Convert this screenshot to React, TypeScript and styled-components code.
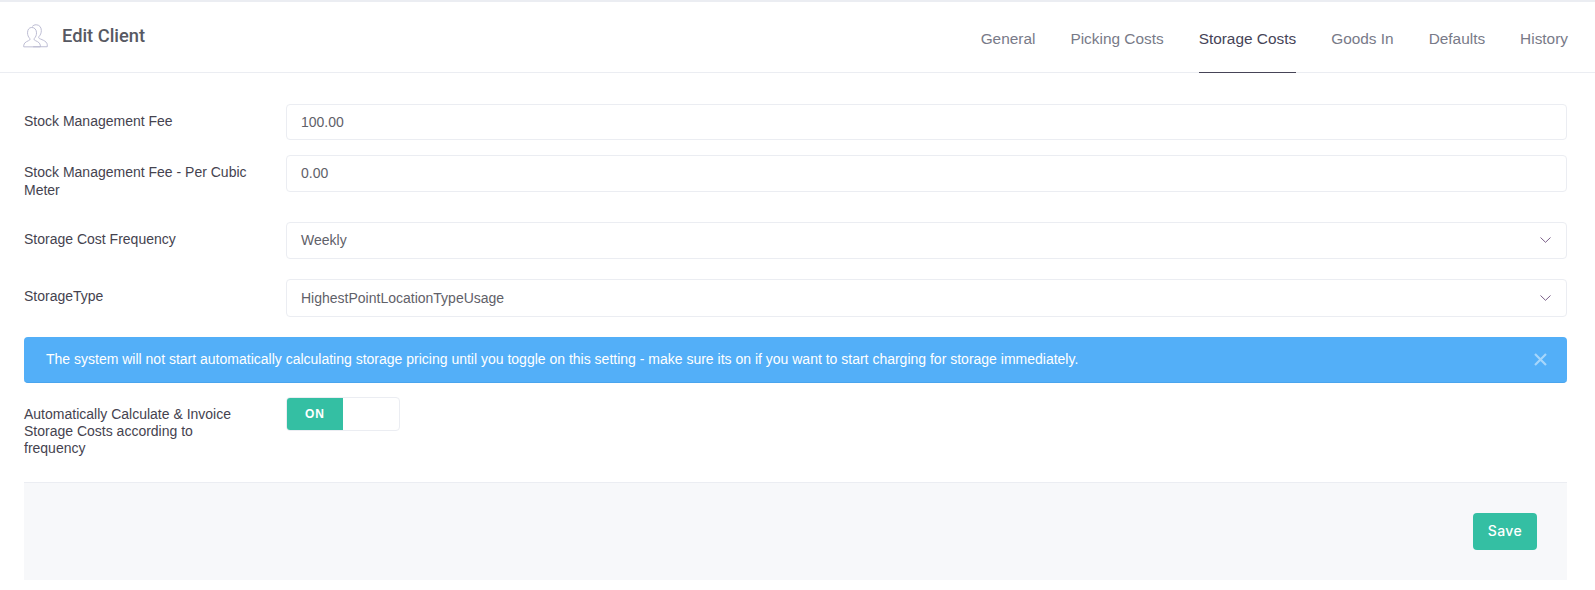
import { FunctionComponent } from "react";
import styled, { createGlobalStyle } from "styled-components";

const GlobalStyle = createGlobalStyle`
  html, body {
    margin: 0;
    padding: 0;
    background: #fff;
  }
  * {
    box-sizing: border-box;
  }
`;

const Page = styled.div`
  width: 100%;
  height: 590px;
  overflow: hidden;
  background: #fff;
  border-top: 2px solid #ebedf2;
  font-family: "Liberation Sans", Arial, sans-serif;
  color: #575962;
`;

// Header with the tabs
const Header = styled.header`
  height: 71px;
  padding: 0 27px 0 23px;
  display: flex;
  justify-content: space-between;
  border-bottom: 1px solid #ebedf2;
`;

const TitleBox = styled.div`
  display: flex;
  align-items: center;
  gap: 14px;
  height: 66px;
`;

const Title = styled.h3`
  margin: 0;
  font-family: Roboto, sans-serif;
  font-size: 18.3px;
  font-weight: 500;
  color: #575962;
`;

const Tabs = styled.nav`
  display: flex;
  gap: 35px;
`;

const Tab = styled.a<{ $active?: boolean }>`
  height: 71px;
  padding-top: 29px;
  font-size: 15.4px;
  line-height: 16px;
  white-space: nowrap;
  color: ${(p) => (p.$active ? "#464457" : "#787a88")};
  border-bottom: 1px solid ${(p) => (p.$active ? "#464457" : "transparent")};
`;

// Form
const Form = styled.form`
  padding: 31px 28px 0 24px;
`;

const Row = styled.div<{ $gap: number }>`
  display: flex;
  gap: 32px;
  margin-bottom: ${(p) => p.$gap}px;
`;

const Label = styled.label`
  flex: 0 0 230px;
  padding: 9px 0 8px;
  font-size: 14px;
  line-height: 17.3px;
  color: #45434f;
`;

const Field = styled.div`
  flex: 1;
  height: 36.4px;
  padding: 0 15px 1px 14px;
  display: flex;
  align-items: center;
  background: #fff;
  border: 1px solid #ebedf2;
  border-radius: 4px;
  font-size: 14px;
  color: #5f6169;
`;

const SelectField = styled(Field)`
  height: 37.4px;
  justify-content: space-between;
`;

const Alert = styled.div`
  height: 46px;
  margin-bottom: 14px;
  padding: 0 20px 0 22px;
  display: flex;
  align-items: center;
  justify-content: space-between;
  background: #53aff8;
  border-radius: 4px;
  border-bottom: 1px solid #4aa5ee;
  font-size: 14px;
  color: #fff;
`;

const CloseIcon = styled.svg`
  width: 13px;
  height: 13px;
  stroke: #a6d6fb;
  stroke-width: 2.2;
  fill: none;
`;

const Toggle = styled.div`
  width: 114px;
  height: 34px;
  display: flex;
  background: #fff;
  border: 1px solid #ebedf2;
  border-radius: 4px;
  overflow: hidden;
`;

const ToggleOn = styled.span`
  width: 56px;
  display: flex;
  align-items: center;
  justify-content: center;
  background: #34bfa3;
  color: #fff;
  font-size: 12px;
  font-weight: 700;
  letter-spacing: 1px;
`;

const Footer = styled.div`
  height: 98px;
  margin: 0 28px 0 24px;
  padding: 30px 30px 0 0;
  display: flex;
  justify-content: flex-end;
  align-items: flex-start;
  background: #f7f8fa;
  border-top: 1px solid #ebedf2;
`;

const SaveButton = styled.button`
  width: 64px;
  height: 37px;
  padding: 0 0 1px;
  border: none;
  border-radius: 4px;
  background: #34bfa3;
  color: #fff;
  font-family: Inter, sans-serif;
  font-size: 14px;
  font-weight: 500;
  letter-spacing: 0.4px;
`;

const UsersSvg = styled.svg`
  width: 25px;
  height: 24px;
  margin-top: 2px;
  fill: none;
  stroke: #b9b9d0;
  stroke-width: 1;
`;

const Chevron: FunctionComponent = () => (
  <svg width="11" height="6" viewBox="0 0 11 6" fill="none" stroke="#6b4d7a" strokeWidth="0.9">
    <path d="M0.5 0.5 L5.5 5.3 L10.5 0.5" />
  </svg>
);

const UsersIcon: FunctionComponent = () => (
  <UsersSvg viewBox="0 0 27 25" preserveAspectRatio="none">
    <path d="M10 2.6C11 1.4 12.5 .8 14.2 .8c3.4 0 5.6 2.5 5.6 6 0 2.6-1 4.8-2.5 6.2-.5.5-.5 1.4 0 1.9 1 .9 8.6 2.4 8.9 6.6v2.2H11" />
    <path d="M9.5 3.6c3.1 0 5.1 2.4 5.1 5.6 0 2.4-.9 4.4-2.3 5.7-.5.5-.5 1.3 0 1.8.9.9 6.2 1.9 6.4 5.4v1.7H.8v-1.7c.2-3.5 5.5-4.5 6.4-5.4.5-.5.5-1.3 0-1.8C5.8 13.6 4.9 11.6 4.9 9.2c0-3.2 1.5-5.6 4.6-5.6z" />
  </UsersSvg>
);

const tabs = ["General", "Picking Costs", "Storage Costs", "Goods In", "Defaults", "History"];

const App: FunctionComponent = () => {
  return (
    <Page>
      <GlobalStyle />
      <Header>
        <TitleBox>
          <UsersIcon />
          <Title>Edit Client</Title>
        </TitleBox>
        <Tabs>
          {tabs.map((t) => (
            <Tab key={t} $active={t === "Storage Costs"}>
              {t}
            </Tab>
          ))}
        </Tabs>
      </Header>

      <Form>
        <Row $gap={15}>
          <Label>Stock Management Fee</Label>
          <Field>100.00</Field>
        </Row>
        <Row $gap={15}>
          <Label>Stock Management Fee - Per Cubic Meter</Label>
          <Field>0.00</Field>
        </Row>
        <Row $gap={20}>
          <Label>Storage Cost Frequency</Label>
          <SelectField>
            Weekly
            <Chevron />
          </SelectField>
        </Row>
        <Row $gap={20}>
          <Label>StorageType</Label>
          <SelectField>
            HighestPointLocationTypeUsage
            <Chevron />
          </SelectField>
        </Row>
        <Alert>
          The system will not start automatically calculating storage pricing until you toggle on this
          setting - make sure its on if you want to start charging for storage immediately.
          <CloseIcon viewBox="0 0 13 13">
            <path d="M1 1 L12 12 M12 1 L1 12" />
          </CloseIcon>
        </Alert>
        <Row $gap={16}>
          <Label>Automatically Calculate &amp; Invoice Storage Costs according to frequency</Label>
          <Toggle>
            <ToggleOn>ON</ToggleOn>
          </Toggle>
        </Row>
      </Form>

      <Footer>
        <SaveButton type="button">Save</SaveButton>
      </Footer>
    </Page>
  );
};

export default App;
